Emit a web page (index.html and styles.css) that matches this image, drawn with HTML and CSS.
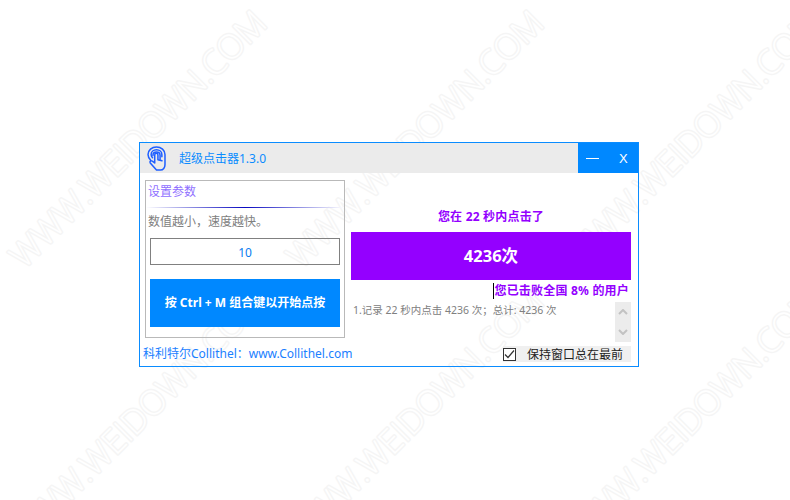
FILE: index.html
```html
<!DOCTYPE html>
<html lang="zh-CN">
<head>
  <meta charset="UTF-8" />
  <title>超级点击器</title>
  <link rel="stylesheet" href="styles.css">
</head>
<body>

<svg class="watermark" width="790" height="500" viewBox="0 0 790 500">
  <text transform="translate(24 270) rotate(-45)">WWW.WEIDOWN.COM</text>
  <text transform="translate(301 270) rotate(-45)">WWW.WEIDOWN.COM</text>
  <text transform="translate(579 270) rotate(-45)">WWW.WEIDOWN.COM</text>
  <text transform="translate(24 548) rotate(-45)">WWW.WEIDOWN.COM</text>
  <text transform="translate(301 548) rotate(-45)">WWW.WEIDOWN.COM</text>
  <text transform="translate(579 548) rotate(-45)">WWW.WEIDOWN.COM</text>
</svg>

<div class="window">
  <div class="titlebar">
    <svg class="logo" width="19" height="25" viewBox="0 0 21 28" fill="none" stroke="#1f5fff" stroke-width="1.700" stroke-linecap="round" stroke-linejoin="round">
      <path d="M4 16C2 14 1 12 1 9.500 1 4.800 5.200 1 10.500 1S20 4.800 20 9.500V21c0 3-2 6-5 6h-4.500L3.500 19c-1-1.500.8-3.200 2.300-2l2.700 2V10c0-2.400 3.600-2.400 3.600 0v5.500l4.500 1"/>
      <path d="M6 13C5 12 4.500 10.800 4.500 9.500c0-3 2.700-5.300 6-5.300s6 2.300 6 5.300v2.500"/>
      <path d="M14.500 15V10.500c0-2.200-1.800-3.700-4-3.700s-4 1.500-4 3.700"/>
    </svg>
    <div class="app-title">超级点击器1.3.0</div>
    <div class="win-btns">
      <span class="min-btn"></span>
      <span class="close-btn">X</span>
    </div>
  </div>

  <div class="content">
    <div class="left-col">
      <div class="settings">
        <div class="settings-title">设置参数</div>
        <div class="grad-line"></div>
        <div class="hint">数值越小，速度越快。</div>
        <div class="num-input">10</div>
        <div class="start-btn">按 Ctrl + M 组合键以开始点按</div>
      </div>
      <div class="site-link">科利特尔Collithel：www.Collithel.com</div>
    </div>

    <div class="right-col">
      <div class="result-head">您在 22 秒内点击了</div>
      <div class="count-bar">4236次</div>
      <div class="beat-line"><span class="caret"></span>您已击败全国 8% 的用户</div>
      <div class="log-box">
        <div class="log-text">1.记录 22 秒内点击 4236 次；总计: 4236 次</div>
        <div class="scrollbar">
          <svg width="10" height="6" viewBox="0 0 10 6" fill="none" stroke="#c2c2c2" stroke-width="2"><path d="M1 5l4-4 4 4"/></svg>
          <svg width="10" height="6" viewBox="0 0 10 6" fill="none" stroke="#c2c2c2" stroke-width="2"><path d="M1 1l4 4 4-4"/></svg>
        </div>
      </div>
      <div class="keep-top">
        <span class="checkbox">
          <svg width="11" height="11" viewBox="0 0 11 11" fill="none" stroke="#333" stroke-width="1.200"><path d="M1 5.500l3 3 6-7"/></svg>
        </span>
        <span class="keep-label">保持窗口总在最前</span>
      </div>
    </div>
  </div>
</div>

</body>
</html>
```

FILE: styles.css
```css
body {
  margin: 0;
  height: 500px;
  overflow: hidden;
  background: #fff;
  position: relative;
  font-family: "Noto Sans", "Noto Sans CJK SC", sans-serif;
  font-size: 12px;
}

/* site watermark, sits behind the app window */
.watermark {
  position: absolute;
  top: 0;
  left: 0;
}
.watermark text {
  font-family: "Open Sans", sans-serif;
  font-weight: 300;
  font-size: 34px;
  fill: #fff;
  stroke: #f5f5f5;
  stroke-width: 3px;
  stroke-linejoin: round;
  paint-order: stroke;
}

.window {
  position: relative;
  width: 498px;
  height: 223px;
  margin-left: 139px;
  top: 142px;
  border: 1px solid #0a8cff;
  display: flex;
  flex-direction: column;
}

.titlebar {
  height: 30px;
  background: #ebebeb;
  display: flex;
  align-items: center;
  flex: none;
}
.logo {
  margin-left: 7px;
  flex: none;
}
.app-title {
  margin-left: 13px;
  color: #0a8cff;
  font-size: 12px;
  flex: 1;
}
.win-btns {
  width: 60px;
  height: 100%;
  background: #0088ff;
  display: flex;
  align-items: center;
  color: #fff;
}
.min-btn {
  width: 13px;
  height: 1px;
  background: #fff;
  margin-left: 8px;
}
.close-btn {
  margin-left: 20px;
  font-size: 13px;
  font-family: "Liberation Sans", sans-serif;
}

.content {
  display: flex;
  flex: 1;
}

.left-col {
  width: 211px;
  flex: none;
}
.settings {
  width: 198px;
  height: 156px;
  margin: 7px 0 0 5px;
  border: 1px solid #b9b9b9;
  display: flex;
  flex-direction: column;
}
.settings-title {
  color: #8f70ff;
  line-height: 22px;
  margin-left: 2px;
}
.grad-line {
  height: 1px;
  margin-top: 4px;
  background: linear-gradient(to right, #fff, #0808c0 50%, #fff);
}
.hint {
  color: #808080;
  line-height: 18px;
  margin: 5px 0 0 2px;
}
.num-input {
  width: 188px;
  height: 25px;
  line-height: 27px;
  margin: 7px 0 0 4px;
  border: 1px solid #808080;
  text-align: center;
  color: #0a7cf0;
}
.start-btn {
  width: 190px;
  height: 48px;
  line-height: 48px;
  margin: 14px 0 0 4px;
  background: #0088ff;
  color: #fff;
  font-weight: bold;
  font-size: 12px;
  text-align: center;
}
.site-link {
  margin: 7px 0 0 3px;
  line-height: 18px;
  color: #1a80ff;
  font-size: 12px;
  white-space: nowrap;
}

.right-col {
  flex: 1;
  width: 280px;
}
.result-head {
  margin-top: 34px;
  height: 20px;
  line-height: 20px;
  color: #9400ff;
  font-weight: bold;
  letter-spacing: .2px;
  text-align: center;
  width: 280px;
}
.count-bar {
  width: 280px;
  height: 48px;
  margin-top: 5px;
  line-height: 48px;
  background: #9400ff;
  color: #fff;
  font-weight: bold;
  font-size: 16.500px;
  text-align: center;
}
.beat-line {
  width: 280px;
  height: 22px;
  line-height: 22px;
  color: #9400ff;
  font-weight: bold;
  letter-spacing: .2px;
  display: flex;
  justify-content: flex-end;
  align-items: center;
  padding-right: 2px;
  box-sizing: border-box;
}
.caret {
  width: 1px;
  height: 16px;
  background: #000;
}
.log-box {
  width: 280px;
  height: 40px;
  display: flex;
  justify-content: space-between;
}
.log-text {
  color: #808080;
  font-size: 10.500px;
  line-height: 16px;
  margin-left: 2px;
}
.scrollbar {
  width: 16px;
  background: #ececec;
  display: flex;
  flex-direction: column;
  justify-content: space-between;
  align-items: center;
  padding: 7px 0;
  box-sizing: border-box;
}
.keep-top {
  width: 128px;
  height: 16px;
  margin: 4px 0 0 152px;
  background: #f0f0f0;
  display: flex;
  align-items: center;
}
.checkbox {
  width: 11px;
  height: 11px;
  border: 1px solid #333;
  background: #fff;
  display: flex;
}
.keep-label {
  margin: 1px 0 0 11px;
  color: #222;
  line-height: 16px;
}
```
